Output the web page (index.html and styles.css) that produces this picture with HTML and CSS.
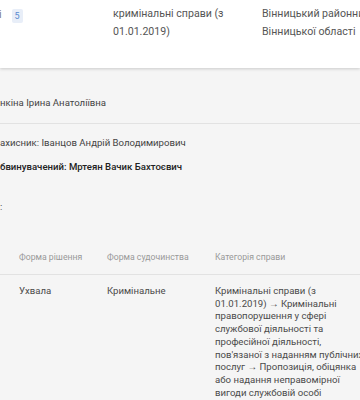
FILE: index.html
```html
<!DOCTYPE html>
<html lang="uk">
<head>
    <meta charset="UTF-8">
    <meta name="viewport" content="width=device-width, initial-scale=1.0">
    <title>Судове рішення</title>
    <link rel="stylesheet" href="styles.css">
</head>
<body>

    <div class="case-row">
        <div class="case-num">
            <span class="case-tail">і</span>
            <span class="badge">5</span>
        </div>
        <div class="case-cell">кримінальні справи (з 01.01.2019)</div>
        <div class="case-cell court">Вінницький районний суд Вінницької області</div>
    </div>

    <div class="details">
        <div class="judge">нкіна Ірина Анатоліївна</div>

        <div class="parties">
            <div class="party">ахисник: Іванцов Андрій Володимирович</div>
            <div class="party accused">бвинувачений: Мртеян Вачик Бахтоєвич</div>
            <div class="party colon">:</div>
        </div>

        <div class="decisions">
            <div class="dec-head">
                <div class="col-form">Форма рішення</div>
                <div class="col-proc">Форма судочинства</div>
                <div class="col-cat">Категорія справи</div>
            </div>
            <div class="dec-row">
                <div class="col-form">Ухвала</div>
                <div class="col-proc">Кримінальне</div>
                <div class="col-cat">Кримінальні справи (з<br>01.01.2019) → Кримінальні<br>правопорушення у сфері<br>службової діяльності та<br>професійної діяльності,<br>пов'язаної з наданням публічних<br>послуг → Пропозиція, обіцянка<br>або надання неправомірної<br>вигоди службовій особі</div>
            </div>
        </div>
    </div>

</body>
</html>
```

FILE: styles.css
```css
body {
    margin: 0;
    font-family: Roboto, "Liberation Sans", sans-serif;
    background-color: #f5f5f5;
    color: #444;
    overflow: hidden;
}

.case-row {
    display: grid;
    grid-template-columns: 113px 149px 160px;
    height: 68px;
    padding-top: 5px;
    box-sizing: border-box;
    background-color: #fff;
    box-shadow: 0 1px 3px rgba(0, 0, 0, 0.18);
    font-size: 10.6px;
    line-height: 18px;
    color: #555;
}

.case-num {
    display: flex;
    align-items: flex-start;
    gap: 10px;
    padding-top: 4px;
}

.case-tail {
    margin-left: -1px;
    line-height: 12px;
    color: #777;
}

.badge {
    width: 11px;
    height: 14px;
    line-height: 14px;
    text-align: center;
    font-size: 9px;
    color: #5a8ad0;
    background-color: #e8eef8;
    border-radius: 2px;
}

.case-cell {
    width: 120px;
}

.court {
    width: 150px;
}

.details {
    padding-top: 27px;
    font-size: 9.6px;
    line-height: 16px;
}

.judge {
    padding-bottom: 12px;
    border-bottom: 1px solid #e2e2e2;
}

.parties {
    padding-top: 11px;
}

.party {
    margin-bottom: 8px;
}

.accused {
    font-weight: 500;
    color: #222;
}

.colon {
    margin-top: 24px;
}

.decisions {
    margin-top: 34px;
}

.dec-head,
.dec-row {
    display: grid;
    grid-template-columns: 88px 108px 180px;
    padding-left: 19px;
}

.dec-head {
    padding-bottom: 9px;
    border-bottom: 1px solid #e2e2e2;
    font-size: 8.7px;
    color: #999;
}

.dec-row {
    padding-top: 10px;
    font-size: 9.6px;
    line-height: 12.7px;
    color: #4a4a4a;
    white-space: nowrap;
}
```
